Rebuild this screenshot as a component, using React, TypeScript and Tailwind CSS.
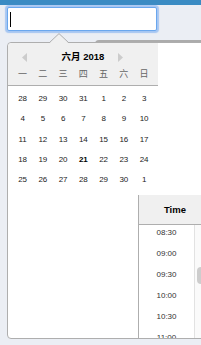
import React from 'react';

const dayNames = ['一', '二', '三', '四', '五', '六', '日'];

const weeks = [
  ['28', '29', '30', '31', '1', '2', '3'],
  ['4', '5', '6', '7', '8', '9', '10'],
  ['11', '12', '13', '14', '15', '16', '17'],
  ['18', '19', '20', '21', '22', '23', '24'],
  ['25', '26', '27', '28', '29', '30', '1'],
];

const times = ['08:30', '09:00', '09:30', '10:00', '10:30', '11:00'];

const Arrow = ({ dir }: { dir: 'left' | 'right' }) => (
  <svg width="5" height="9" viewBox="0 0 5 9" className="block">
    {dir === 'left' ? (
      <path d="M5 0 L0 4.5 L5 9 Z" fill="#cccccc" />
    ) : (
      <path d="M0 0 L5 4.5 L0 9 Z" fill="#cccccc" />
    )}
  </svg>
);

const App = () => {
  return (
    <div className="relative w-[201px] h-[345px] overflow-hidden bg-[#ebeef4] font-['Liberation_Sans','Noto_Sans_CJK_SC',sans-serif]">
      <div className="h-[5px] bg-[#3a8bc3]" />

      {/* focused input */}
      <div className="ml-[7px] mt-[2px] w-[150px] h-[24px] bg-white border border-[#6aa7ee] rounded-[2px] shadow-[0_0_1px_2px_rgba(110,165,240,0.55)] flex items-center pl-[2px]">
        <span className="block w-[1px] h-[15px] bg-black" />
      </div>

      {/* popup behind the calendar */}
      <div className="absolute left-[95px] top-[40px] w-[130px] h-[20px] border-t-2 border-l border-[#acacac] rounded-tl-[4px] bg-white" />

      {/* calendar popup */}
      <div className="relative z-10 ml-[7px] mt-[11px] w-[220px] h-[297px] border border-[#aeaeae] rounded-[4px] bg-white flex flex-col">
        <svg
          width="24"
          height="11"
          viewBox="0 0 24 11"
          className="absolute left-[40px] top-[-10px]"
        >
          <path d="M1 10.5 L11 1 L21 10.5 Z" fill="#f0f0f0" />
          <path d="M1 10 L11 0.6 L21 10" fill="none" stroke="#aeaeae" strokeWidth="1" />
        </svg>

        <div className="w-[150px]">
          <div className="relative h-[43px] pt-[8px] bg-[#f0f0f0] border-b border-[#aeaeae] rounded-tl-[4px]">
            <div className="absolute left-[14px] top-[10px]">
              <Arrow dir="left" />
            </div>
            <div className="absolute left-[110px] top-[10px]">
              <Arrow dir="right" />
            </div>
            <div className="h-[12px] leading-[12px] text-center text-[9.5px] font-bold text-black">
              六月 2018
            </div>
            <div className="mt-[5px] pl-[4.5px] grid grid-cols-[repeat(7,20.25px)] h-[12px] leading-[12px] text-[9px] text-[#666666]">
              {dayNames.map((d) => (
                <div key={d} className="text-center">
                  {d}
                </div>
              ))}
            </div>
          </div>

          <div className="pt-[3px] pl-[4.5px]">
            {weeks.map((week, i) => (
              <div key={i} className="grid grid-cols-[repeat(7,20.25px)] h-[20.25px] leading-[20.25px] text-[8px] text-[#222222]">
                {week.map((day, j) => (
                  <div
                    key={j}
                    className={
                      i === 3 && day === '21'
                        ? 'text-center font-bold text-black'
                        : 'text-center'
                    }
                  >
                    {day}
                  </div>
                ))}
              </div>
            ))}
          </div>
        </div>

        {/* time column */}
        <div className="ml-[130px] mt-[5px] flex-1 w-[73px] border-l border-[#aeaeae] flex flex-col min-h-0">
          <div className="h-[30px] bg-[#f0f0f0] border-b border-[#aeaeae] text-center leading-[29px] text-[9.5px] font-bold text-black">
            Time
          </div>
          <div className="flex-1 flex min-h-0 overflow-hidden">
            <div className="w-[55px] overflow-hidden">
              <div className="-mt-[3.5px]">
                {times.map((t) => (
                  <div key={t} className="h-[21px] leading-[21px] text-center text-[8px] text-[#333333]">
                    {t}
                  </div>
                ))}
              </div>
            </div>
            <div className="relative w-[17px] border-l border-[#e2e2e2] bg-[#fafafa]">
              <div className="absolute left-[2px] top-[42px] w-[8px] h-[17px] rounded-full bg-[#cdcdcd]" />
            </div>
          </div>
        </div>
      </div>
    </div>
  );
};

export default App;
